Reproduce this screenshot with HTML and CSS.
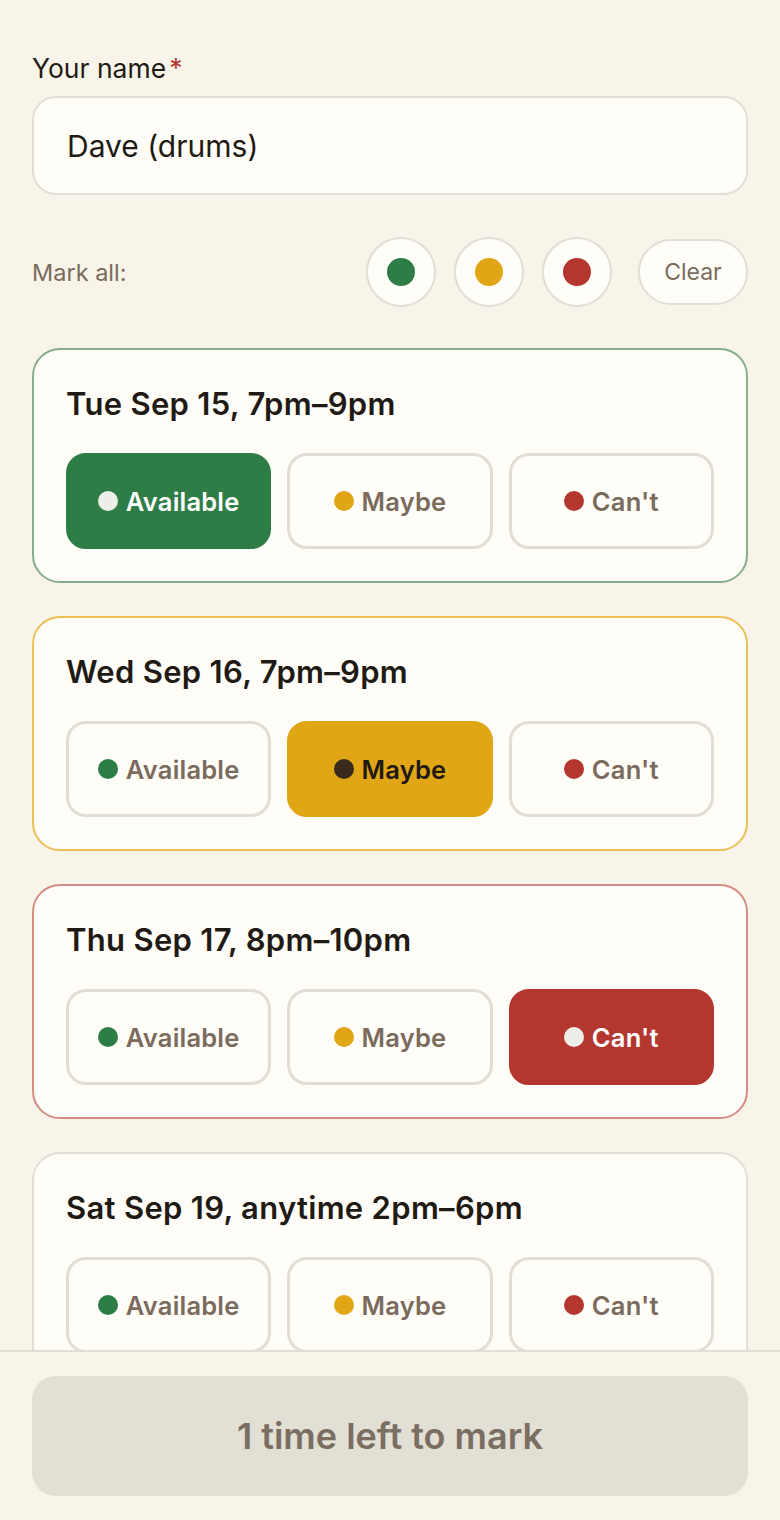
FILE: index.html
```html
<!DOCTYPE html>
<html lang="en">
<head>
<meta charset="utf-8">
<link rel="stylesheet" href="styles.css">
</head>
<body>
<main class="page">
  <label class="field-label">Your name<span class="req">*</span></label>
  <div class="name-input">Dave (drums)</div>

  <div class="mark-all">
    <span class="mark-label">Mark all:</span>
    <div class="mark-actions">
      <button class="round"><span class="dot dot-lg green"></span></button>
      <button class="round"><span class="dot dot-lg yellow"></span></button>
      <button class="round"><span class="dot dot-lg red"></span></button>
      <button class="clear">Clear</button>
    </div>
  </div>

  <section class="card card-green">
    <h2 class="card-title">Tue Sep 15, 7pm–9pm</h2>
    <div class="choices">
      <button class="choice sel-green"><span class="dot light"></span>Available</button>
      <button class="choice"><span class="dot yellow"></span>Maybe</button>
      <button class="choice"><span class="dot red"></span>Can't</button>
    </div>
  </section>

  <section class="card card-yellow">
    <h2 class="card-title">Wed Sep 16, 7pm–9pm</h2>
    <div class="choices">
      <button class="choice"><span class="dot green"></span>Available</button>
      <button class="choice sel-yellow"><span class="dot dark"></span>Maybe</button>
      <button class="choice"><span class="dot red"></span>Can't</button>
    </div>
  </section>

  <section class="card card-red">
    <h2 class="card-title">Thu Sep 17, 8pm–10pm</h2>
    <div class="choices">
      <button class="choice"><span class="dot green"></span>Available</button>
      <button class="choice"><span class="dot yellow"></span>Maybe</button>
      <button class="choice sel-red"><span class="dot light"></span>Can't</button>
    </div>
  </section>

  <section class="card">
    <h2 class="card-title">Sat Sep 19, anytime 2pm–6pm</h2>
    <div class="choices">
      <button class="choice"><span class="dot green"></span>Available</button>
      <button class="choice"><span class="dot yellow"></span>Maybe</button>
      <button class="choice"><span class="dot red"></span>Can't</button>
    </div>
  </section>
</main>

<footer class="bottom-bar">
  <button class="submit" disabled>1 time left to mark</button>
</footer>
</body>
</html>
```

FILE: styles.css
```css
* { box-sizing: border-box; }

html, body {
  margin: 0;
  padding: 0;
  background: #f8f4ea;
}

body {
  font-family: Inter, "Liberation Sans", Arial, sans-serif;
  color: #1f1a14;
}

button {
  font-family: inherit;
  cursor: pointer;
}

.page {
  padding: 52px 32px 200px;
  display: flex;
  flex-direction: column;
}

.field-label {
  font-size: 26.5px;
  line-height: 32px;
  font-weight: 400;
  color: #1f1a14;
  margin-bottom: 12px;
}

.req {
  color: #b3372f;
  margin-left: 3px;
}

.name-input {
  height: 99px;
  border: 2px solid #e2ded6;
  border-radius: 24px;
  background: #fefdf8;
  padding: 0 33px;
  display: flex;
  align-items: center;
  font-size: 30px;
  color: #1f1a14;
}

.mark-all {
  margin-top: 42px;
  height: 70px;
  display: flex;
  align-items: center;
  justify-content: space-between;
}

.mark-label {
  font-size: 23.5px;
  color: #7a6b5d;
}

.mark-actions {
  display: flex;
  align-items: center;
  gap: 18px;
}

.round {
  width: 70px;
  height: 70px;
  border-radius: 50%;
  border: 2px solid #e2ded6;
  background: #fefdf8;
  padding: 0;
  display: flex;
  align-items: center;
  justify-content: center;
}

.clear {
  margin-left: 8px;
  width: 110px;
  height: 66px;
  border-radius: 33px;
  border: 2px solid #e2ded6;
  background: #fefdf8;
  font-size: 23px;
  color: #7a6b5d;
  padding: 0;
}

.dot {
  display: inline-block;
  width: 20px;
  height: 20px;
  border-radius: 50%;
  flex: none;
}

.dot-lg {
  width: 28px;
  height: 28px;
}

.green { background: #2e7d46; }
.yellow { background: #e0a615; }
.red { background: #b3372f; }
.light { background: #eeeee8; }
.dark { background: #3a2a1e; }

.card {
  margin-top: 41px;
  border: 2px solid #e2ded6;
  border-radius: 28px;
  background: #fefdf8;
  padding: 32px;
}

.card + .card { margin-top: 33px; }

.card-green { border-color: #86ae8c; }
.card-yellow { border-color: #ebc156; }
.card-red { border-color: #d48c84; }

.card-title {
  margin: 0 0 27px;
  font-size: 31px;
  line-height: 44px;
  font-weight: 600;
  letter-spacing: 0.3px;
  color: #1f1a14;
}

.choices {
  display: grid;
  grid-template-columns: repeat(3, 1fr);
  gap: 16px;
}

.choice {
  height: 96px;
  border: 3px solid #e2ded6;
  border-radius: 20px;
  background: #fefdf8;
  display: flex;
  align-items: center;
  justify-content: center;
  gap: 8px;
  font-size: 25.5px;
  font-weight: 600;
  letter-spacing: 0.2px;
  color: #7a6b5d;
  padding: 0;
}

.sel-green {
  background: #2e7d46;
  border-color: #2e7d46;
  color: #ffffff;
}

.sel-yellow {
  background: #e0a615;
  border-color: #e0a615;
  color: #1f1a14;
}

.sel-red {
  background: #b3372f;
  border-color: #b3372f;
  color: #ffffff;
}

.bottom-bar {
  position: fixed;
  left: 0;
  right: 0;
  bottom: 0;
  height: 170px;
  background: #f8f4ea;
  border-top: 2px solid #e2ded6;
  padding: 24px 32px 0;
}

.submit {
  width: 100%;
  height: 120px;
  border: none;
  border-radius: 24px;
  background: #e2dfd4;
  color: #7a6e62;
  font-size: 36px;
  font-weight: 600;
  cursor: default;
}
```
